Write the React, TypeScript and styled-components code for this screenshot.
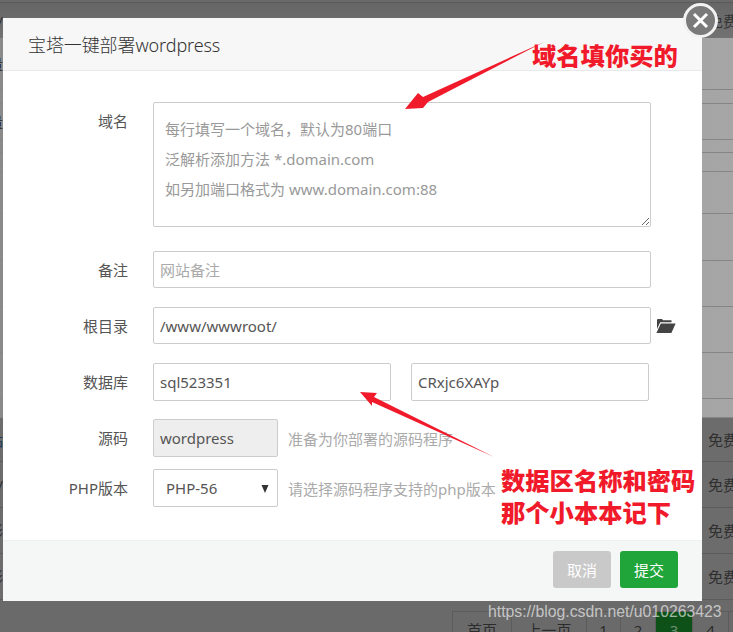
import React from 'react';
import styled, { createGlobalStyle } from 'styled-components';

const GlobalStyle = createGlobalStyle`
  html, body {
    margin: 0;
    padding: 0;
    background: #6a6a6a;
  }
  * {
    box-sizing: border-box;
  }
`;

const FONT = `"Noto Sans", "Noto Sans CJK SC", sans-serif`;

const Page = styled.div`
  position: relative;
  width: 733px;
  height: 632px;
  overflow: hidden;
  font-family: ${FONT};
  font-size: 15px;
`;

/* dimmed table behind the dialog */
const TopBand = styled.div`
  height: 36px;
  margin-top: 2px;
  display: flex;
  justify-content: space-between;
  align-items: center;
  border-top: 1px solid #5a5a5a;
  background: linear-gradient(to bottom, #666, #727272);
  color: #333;
`;

const LightSection = styled.div`
  height: 380px;
  background: linear-gradient(to right, #8a8a8a, #a6a6a6);
`;

const LightRow = styled.div<{ $h: number }>`
  height: ${p => p.$h}px;
  border-bottom: 1px solid #858585;
  display: flex;
  align-items: center;
  color: #222;
`;

const DarkRow = styled.div<{ $h: number }>`
  height: ${p => p.$h}px;
  display: flex;
  justify-content: space-between;
  align-items: center;
  background: #6c6c6c;
  border-bottom: 1px solid #5c5c5c;
  color: #2f2f2f;
`;

const LeftStub = styled.span<{ $blue?: boolean }>`
  width: 3px;
  overflow: hidden;
  display: flex;
  justify-content: flex-end;
  white-space: nowrap;
  color: ${p => (p.$blue ? '#1d3c5c' : 'inherit')};
`;

const RightStub = styled.span`
  width: 25px;
  white-space: nowrap;
  overflow: hidden;
`;

const PagerBar = styled.div`
  display: flex;
  margin: 11px 0 0 452px;
  height: 40px;
  border-top: 1px solid #5c5c5c;
  border-left: 1px solid #5c5c5c;
  color: #2c2c2c;
`;

const PagerCell = styled.div<{ $w: number; $active?: boolean }>`
  width: ${p => p.$w}px;
  text-align: center;
  padding-top: 7px;
  line-height: 22px;
  border-right: 1px solid #5c5c5c;
  background: ${p => (p.$active ? '#0d5119' : 'transparent')};
  color: ${p => (p.$active ? '#6e8f74' : 'inherit')};
`;

/* dialog */
const Modal = styled.div`
  position: absolute;
  left: 3px;
  top: 18px;
  width: 699px;
  height: 583px;
  background: #fff;
  display: flex;
  flex-direction: column;
`;

const ModalHeader = styled.div`
  height: 53px;
  padding-left: 25px;
  display: flex;
  align-items: center;
  background: #f7f7f7;
  border-bottom: 1px solid #e9e9e9;
  font-size: 18px;
  font-weight: 300;
  letter-spacing: -0.1px;
  color: #333;
`;

const ModalBody = styled.div`
  flex: 1;
  padding-top: 31px;
`;

const FormRow = styled.div<{ $top?: number }>`
  display: flex;
  align-items: flex-start;
  margin-top: ${p => p.$top ?? 0}px;
`;

const Label = styled.div`
  width: 125px;
  height: 37px;
  flex: none;
  margin-right: 25px;
  line-height: 39px;
  text-align: right;
  color: #555;
`;

const TextAreaWrap = styled.div`
  position: relative;
  width: 498px;
  height: 125px;
`;

const TextArea = styled.textarea`
  display: block;
  width: 498px;
  height: 125px;
  border: 1px solid #ccc;
  border-radius: 2px;
  background: #fff;
  outline: none;
`;

const AreaHint = styled.div`
  position: absolute;
  left: 12px;
  top: 12px;
  line-height: 30px;
  color: #999;
  pointer-events: none;
`;

const TextInput = styled.input<{ $w?: number; $h?: number; $left?: number }>`
  display: block;
  width: ${p => p.$w ?? 498}px;
  height: ${p => p.$h ?? 37}px;
  margin-left: ${p => p.$left ?? 0}px;
  padding: 0 6px;
  border: 1px solid #ccc;
  border-radius: 2px;
  background: #fff;
  font: 15px ${FONT};
  color: #555;
  outline: none;

  &::placeholder {
    color: #aaa;
    opacity: 1;
  }

  &:disabled {
    background: #eee;
    color: #555;
    -webkit-text-fill-color: #555;
  }
`;

const FolderIcon = styled.svg`
  align-self: center;
  margin-left: 5px;
  flex: none;
`;

const SelectWrap = styled.div`
  position: relative;
  width: 125px;
  height: 38px;
`;

const SelectBox = styled.select`
  display: block;
  width: 125px;
  height: 38px;
  padding: 0 12px;
  border: 1px solid #ccc;
  border-radius: 2px;
  background: #fff;
  font: 15px ${FONT};
  color: #555;
  outline: none;
  appearance: none;
`;

const SelectArrow = styled.svg`
  position: absolute;
  right: 9px;
  top: 16px;
  pointer-events: none;
`;

const Hint = styled.span`
  align-self: center;
  margin-left: 10px;
  color: #aaa;
  white-space: nowrap;
`;

const ModalFooter = styled.div`
  height: 61px;
  padding: 10px 24px 0 0;
  display: flex;
  justify-content: flex-end;
  gap: 9px;
  background: #f5f7f7;
  border-top: 1px solid #eef0f0;
`;

const Button = styled.button<{ $primary?: boolean }>`
  width: 58px;
  height: 37px;
  border: none;
  border-radius: 3px;
  background: ${p => (p.$primary ? '#20a53a' : '#c9c9c9')};
  color: #fff;
  font: 15px ${FONT};
`;

const CloseButton = styled.button`
  position: absolute;
  left: 683px;
  top: 3px;
  width: 35px;
  height: 35px;
  padding: 0;
  border: 3px solid #f2f2f2;
  border-radius: 50%;
  background: #7a7a7a;
  display: flex;
  align-items: center;
  justify-content: center;
`;

/* red notes painted on the screenshot */
const ArrowLayer = styled.svg`
  position: absolute;
  left: 0;
  top: 0;
  pointer-events: none;
`;

const Note = styled.div<{ $x: number; $y: number }>`
  position: absolute;
  left: ${p => p.$x}px;
  top: ${p => p.$y}px;
  font: 900 24.3px/32px "Noto Sans CJK SC", sans-serif;
  color: #f01a2b;
  white-space: nowrap;
`;

const Watermark = styled.div`
  position: absolute;
  left: 488px;
  top: 603px;
  font: 15.8px/18px "Liberation Sans", Arial, sans-serif;
  color: rgba(255, 255, 255, 0.62);
  white-space: nowrap;
`;

const LIGHT_ROWS = [
  { h: 52, left: '量' },
  { h: 14 },
  { h: 36, left: '量' },
  { h: 13 },
  { h: 19 },
  { h: 42 },
  { h: 47 },
  { h: 46 },
  { h: 46 },
  { h: 46 },
  { h: 19 },
];

const DARK_ROWS = [
  { h: 44, left: '站', blue: true },
  { h: 46, left: '/' },
  { h: 46, left: '彩' },
  { h: 46, left: '彩' },
];

const PAGER = [
  { w: 59, text: '首页' },
  { w: 75, text: '上一页' },
  { w: 34, text: '1' },
  { w: 35, text: '2' },
  { w: 37, text: '3', active: true },
  { w: 36, text: '4' },
];

export default function App() {
  return (
    <Page>
      <GlobalStyle />

      <TopBand>
        <LeftStub>/</LeftStub>
        <RightStub>免费</RightStub>
      </TopBand>
      <LightSection>
        {LIGHT_ROWS.map((row, i) => (
          <LightRow key={i} $h={row.h}>
            {row.left && <LeftStub>{row.left}</LeftStub>}
          </LightRow>
        ))}
      </LightSection>
      {DARK_ROWS.map((row, i) => (
        <DarkRow key={i} $h={row.h}>
          <LeftStub $blue={row.blue}>{row.left}</LeftStub>
          <RightStub>免费</RightStub>
        </DarkRow>
      ))}
      <PagerBar>
        {PAGER.map(cell => (
          <PagerCell key={cell.text} $w={cell.w} $active={cell.active}>
            {cell.text}
          </PagerCell>
        ))}
      </PagerBar>

      <Modal>
        <ModalHeader>宝塔一键部署wordpress</ModalHeader>
        <ModalBody>
          <FormRow>
            <Label>域名</Label>
            <TextAreaWrap>
              <TextArea />
              <AreaHint>
                每行填写一个域名，默认为80端口
                <br />
                泛解析添加方法 *.domain.com
                <br />
                如另加端口格式为 www.domain.com:88
              </AreaHint>
            </TextAreaWrap>
          </FormRow>
          <FormRow $top={24}>
            <Label>备注</Label>
            <TextInput placeholder="网站备注" />
          </FormRow>
          <FormRow $top={19}>
            <Label>根目录</Label>
            <TextInput defaultValue="/www/wwwroot/" />
            <FolderIcon width="20" height="14" viewBox="0 0 20 14" fill="#444">
              <path d="M1.5 0H6l1 1.2h8.5v2H4.2L1 10V1z" />
              <path d="M4.8 4.4H19.6L15.4 14H0.4z" />
            </FolderIcon>
          </FormRow>
          <FormRow $top={19}>
            <Label>数据库</Label>
            <TextInput $w={238} $h={38} defaultValue="sql523351" />
            <TextInput $w={238} $h={38} $left={20} defaultValue="CRxjc6XAYp" />
          </FormRow>
          <FormRow $top={18}>
            <Label>源码</Label>
            <TextInput $w={125} $h={38} disabled defaultValue="wordpress" />
            <Hint>准备为你部署的源码程序</Hint>
          </FormRow>
          <FormRow $top={12}>
            <Label>PHP版本</Label>
            <SelectWrap>
              <SelectBox defaultValue="PHP-56">
                <option>PHP-56</option>
              </SelectBox>
              <SelectArrow width="8" height="8" viewBox="0 0 8 8" fill="#333">
                <path d="M0.5 0H7.5L4 8z" />
              </SelectArrow>
            </SelectWrap>
            <Hint>请选择源码程序支持的php版本</Hint>
          </FormRow>
        </ModalBody>
        <ModalFooter>
          <Button>取消</Button>
          <Button $primary>提交</Button>
        </ModalFooter>
      </Modal>

      <CloseButton>
        <svg width="17" height="17" viewBox="0 0 17 17" stroke="#fff" strokeWidth="3">
          <path d="M2 2l13 13M15 2L2 15" />
        </svg>
      </CloseButton>

      <ArrowLayer width="733" height="632" viewBox="0 0 733 632" fill="#f01a2b">
        <path d="M544 42L428 102L423 108L405 109L418 93L423 97z" />
        <path d="M360 392L377 393L374 397L494 457L372 402L372 406z" />
      </ArrowLayer>

      <Note $x={532} $y={39}>域名填你买的</Note>
      <Note $x={501} $y={464}>
        数据区名称和密码
        <br />
        那个小本本记下
      </Note>
      <Watermark>https://blog.csdn.net/u010263423</Watermark>
    </Page>
  );
}
